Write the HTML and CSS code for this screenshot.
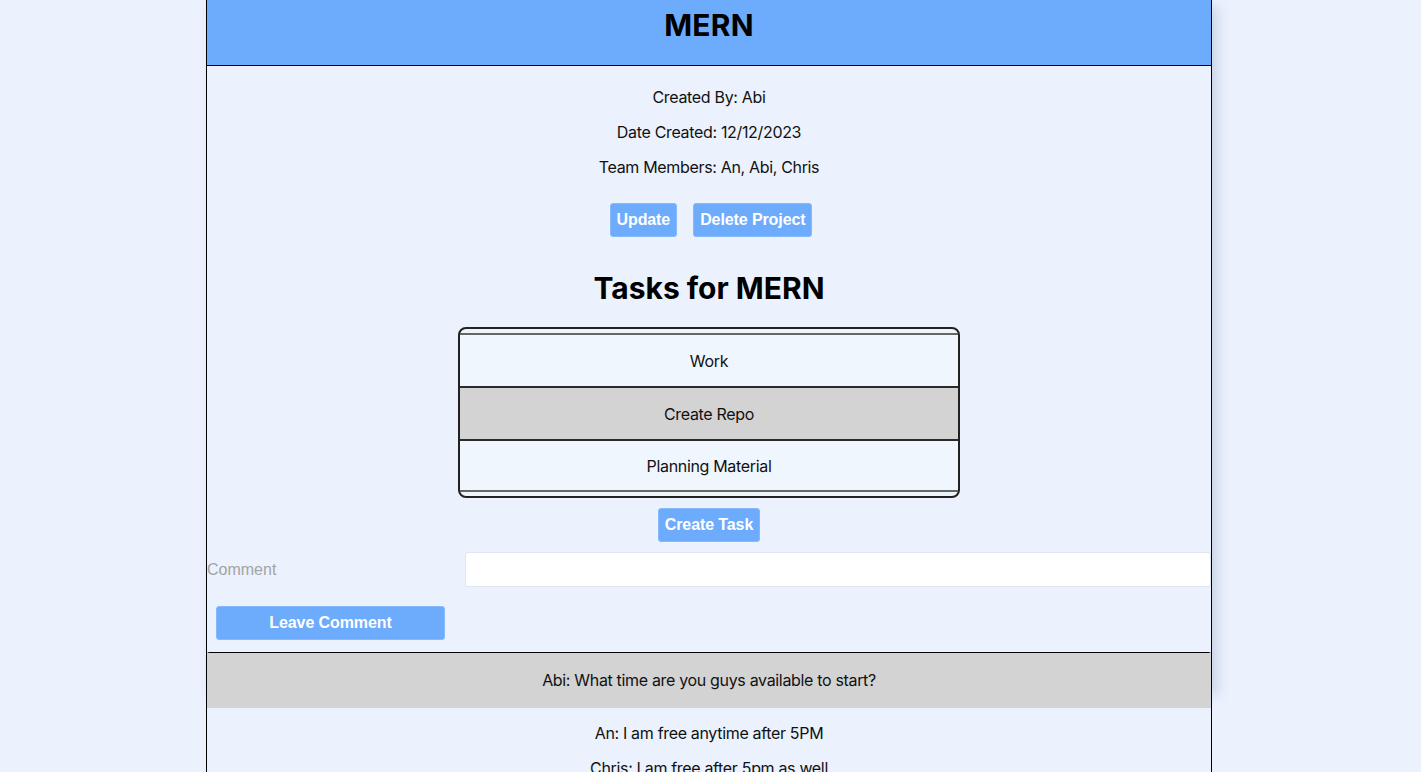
FILE: index.html
```html
<!DOCTYPE html>
<html lang="en">
<head>
<meta charset="utf-8">
<title>MERN</title>
<link rel="stylesheet" href="styles.css">
</head>
<body>
<main class="card">
  <header class="card-header">
    <h1 class="title">MERN</h1>
  </header>
  <section class="meta">
    <p class="meta-line">Created By: Abi</p>
    <p class="meta-line">Date Created: 12/12/2023</p>
    <p class="meta-line">Team Members: An, Abi, Chris</p>
  </section>
  <div class="actions">
    <button class="btn">Update</button>
    <button class="btn">Delete Project</button>
  </div>
  <h2 class="tasks-title">Tasks for MERN</h2>
  <ul class="task-list">
    <li class="task">Work</li>
    <li class="task task-active">Create Repo</li>
    <li class="task">Planning Material</li>
  </ul>
  <div class="actions actions-task">
    <button class="btn">Create Task</button>
  </div>
  <form class="comment-form">
    <label class="comment-label" for="comment">Comment</label>
    <input class="comment-input" id="comment" type="text">
    <button class="btn btn-wide" type="button">Leave Comment</button>
  </form>
  <section class="comments">
    <p class="comment comment-active">Abi: What time are you guys available to start?</p>
    <p class="comment">An: I am free anytime after 5PM</p>
    <p class="comment">Chris: I am free after 5pm as well</p>
  </section>
</main>
</body>
</html>
```

FILE: styles.css
```css
* { box-sizing: border-box; }

html {
  overflow: hidden;
  background: #ebf2fe;
}

body {
  margin: 0;
  padding: 0;
  font-family: "Inter", "Noto Sans", sans-serif;
  color: #111;
}

.card {
  position: relative;
  z-index: 0;
  width: 1006px;
  margin: 0 0 0 206px;
  border-left: 1px solid #000;
  border-right: 1px solid #000;
  display: flex;
  flex-direction: column;
  align-items: stretch;
}

/* drop shadow of the fixed-height card frame */
.card::before {
  content: "";
  position: absolute;
  top: 0;
  left: -1px;
  right: -1px;
  height: 690px;
  box-shadow: 6px 6px 12px rgba(40, 60, 110, 0.16);
  z-index: -1;
  pointer-events: none;
}

.card > * { flex-shrink: 0; }

.card-header {
  height: 66px;
  background: #6dabfc;
  border-bottom: 1px solid #000;
  border-left: 1px solid #000;
  display: flex;
  align-items: flex-start;
  justify-content: center;
  margin-left: -1px;
}

.title {
  margin: 0;
  padding-top: 7px;
  font-size: 30px;
  line-height: 36px;
  font-weight: 700;
  color: #000;
  letter-spacing: 0.2px;
}

.meta {
  display: flex;
  flex-direction: column;
  align-items: center;
  padding-top: 22px;
}

.meta-line {
  margin: 0 0 16px 0;
  font-size: 16px;
  line-height: 19px;
  letter-spacing: -0.33px;
}

.actions {
  display: flex;
  justify-content: center;
  gap: 16px;
  margin-top: 10px;
  padding-left: 4px;
}

.btn {
  font-family: "Liberation Sans", Arial, sans-serif;
  font-weight: 700;
  font-size: 16px;
  line-height: 18px;
  color: #fff;
  background: #6dabfc;
  border: 1px solid #86b9fc;
  border-radius: 3px;
  padding: 7px 6px;
  letter-spacing: -0.1px;
  cursor: pointer;
}

.tasks-title {
  margin: 33px 0 0 0;
  text-align: center;
  font-size: 30px;
  line-height: 36px;
  font-weight: 700;
  color: #000;
}

.task-list {
  list-style: none;
  width: 502px;
  margin: 21px auto 0 auto;
  padding: 4px 0;
  border: 2px solid #222;
  border-radius: 8px;
  background: #eef5f6;
}

.task {
  height: 53px;
  display: flex;
  align-items: center;
  justify-content: center;
  font-size: 16px;
  letter-spacing: -0.33px;
  background: #f0f6fe;
  border-top: 2px solid #2a2a2a;
}

.task:first-child { border-top-color: #666; }
.task:last-child { border-bottom: 2px solid #666; }

.task-active { background: #d3d3d3; }

.actions-task {
  margin-top: 10px;
  padding-left: 0;
}

.comment-form {
  display: grid;
  grid-template-columns: 258px 1fr;
  align-items: center;
  row-gap: 19px;
  margin-top: 10px;
}

.comment-label {
  font-family: "Liberation Sans", Arial, sans-serif;
  font-size: 16px;
  color: #a3a3a3;
}

.comment-input {
  height: 35px;
  border: 1px solid #dfe6f2;
  border-radius: 3px;
  background: #fff;
  width: 100%;
}

.btn-wide {
  width: 229px;
  margin-left: 9px;
  grid-column: 1 / 3;
  justify-self: start;
}

.comments {
  margin: 12px -1px 0 -1px;
  border-top: 1px solid #000;
  border-left: 1px solid #000;
  border-right: 1px solid #000;
  border-radius: 4px 4px 0 0;
  display: flex;
  flex-direction: column;
  align-items: stretch;
}

.comment {
  margin: 0 0 16px 0;
  font-size: 16px;
  line-height: 19px;
  letter-spacing: -0.33px;
  text-align: center;
}

.comment-active {
  background: #d3d3d3;
  padding: 18px 0;
  line-height: 19px;
}
```
